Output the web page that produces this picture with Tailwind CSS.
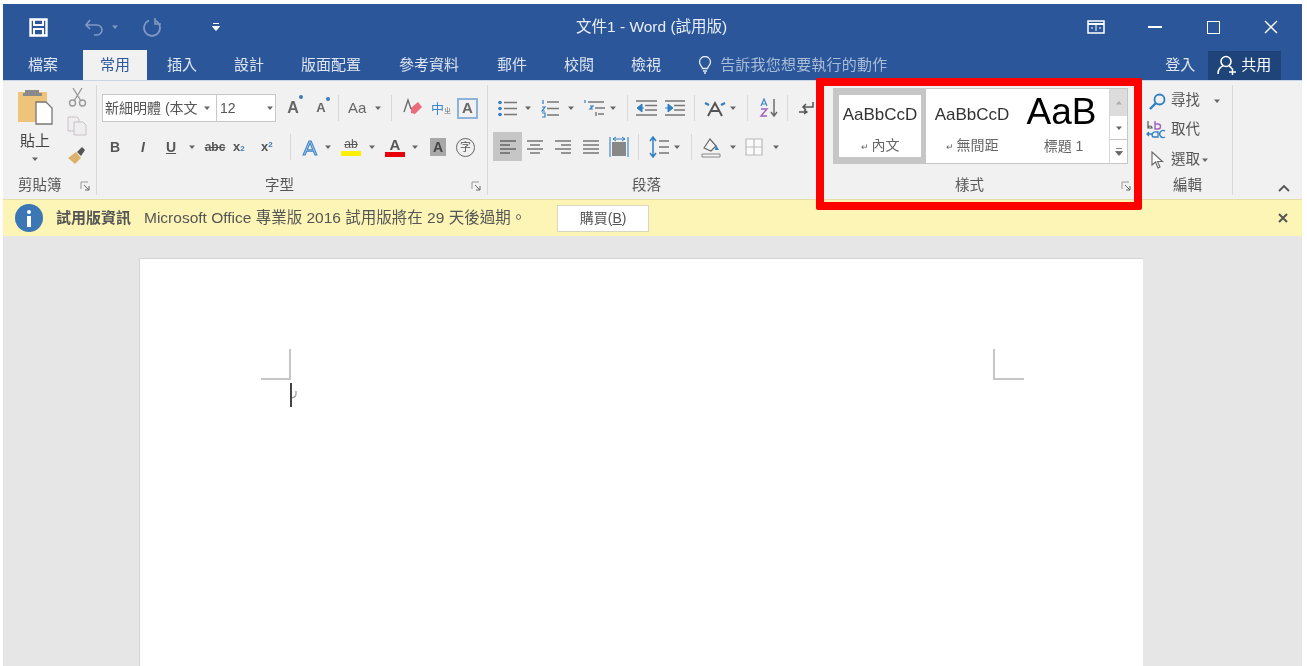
<!DOCTYPE html>
<html lang="zh-Hant">
<head>
  <meta charset="UTF-8" />
  <title>文件1 - Word (試用版)</title>
  <script src="https://cdn.jsdelivr.net/npm/@tailwindcss/browser@4"></script>
</head>
<body class="bg-white h-[666px] overflow-hidden font-['Liberation_Sans','Noto_Sans_CJK_TC',sans-serif] text-[#555]">

  <svg class="hidden">
    <symbol id="caret" viewBox="0 0 8 8"><path d="M1 2.5h6L4 6z" fill="#666"/></symbol>
    <symbol id="launcher" viewBox="0 0 10 10"><path d="M1 8V1h7" fill="none" stroke="#999"/><path d="M4 4l5 5M9 5v4H5" fill="none" stroke="#666"/></symbol>
    <symbol id="lines" viewBox="0 0 18 16"><path d="M1 2h16M1 6h16M1 10h16M1 14h16" stroke="#777" stroke-width="1.5"/></symbol>
  </svg>

  <div class="ml-[3px] mr-[5px] mt-[4px] flex flex-col h-[662px] blur-[0.6px]">

    <!-- Title bar -->
    <div class="h-[46px] bg-[#2b579a] flex items-center text-white relative">
      <svg class="ml-[26px] w-[19px] h-[19px]" viewBox="0 0 19 19"><path d="M1.5 1.5h16v16h-16z" fill="none" stroke="#fff" stroke-width="2.4"/><path d="M5 2v5h9V2M5 17v-6h9v6" fill="none" stroke="#fff" stroke-width="2"/></svg>
      <svg class="ml-[36px] w-[20px] h-[19px] opacity-40" viewBox="0 0 20 19"><path d="M2 7h11a5 5 0 0 1 0 10h-3M6 2L2 7l4 4" fill="none" stroke="#fff" stroke-width="1.6"/></svg>
      <svg class="ml-[7px] w-[8px] h-[8px] opacity-40" viewBox="0 0 8 8"><path d="M1 2.5h6L4 6z" fill="#fff"/></svg>
      <svg class="ml-[23px] w-[20px] h-[20px] opacity-40" viewBox="0 0 20 20"><path d="M7 3.5a8 8 0 1 0 6 0M13 1v6h6" fill="none" stroke="#fff" stroke-width="1.6"/></svg>
      <svg class="ml-[50px] w-[8px] h-[10px]" viewBox="0 0 8 10"><path d="M1 1.5h6M.5 4.5h7L4 8.5z" stroke="#fff" fill="#fff"/></svg>
      <span class="ml-[356px] text-[15.5px] text-[#e8edf5] whitespace-nowrap">文件1 - Word (試用版)</span>
      <svg class="ml-[360px] w-[18px] h-[14px]" viewBox="0 0 18 14"><path d="M1 1h16v12H1z" fill="none" stroke="#fff" stroke-width="1.5"/><path d="M1 4h16" stroke="#fff" stroke-width="2"/><path d="M9 5v6M6 8l-2 0M12 8h2" stroke="#fff"/></svg>
      <div class="ml-[43px] w-[14px] h-[1.5px] bg-white"></div>
      <div class="ml-[45px] w-[13px] h-[13px] border-[1.5px] border-white"></div>
      <svg class="ml-[44px] w-[14px] h-[14px]" viewBox="0 0 14 14"><path d="M1 1l12 12M13 1L1 13" stroke="#fff" stroke-width="1.4"/></svg>
    </div>

    <!-- Tabs -->
    <div class="h-[30px] bg-[#2b579a] flex items-center text-[15px] text-[#dfe6f1] whitespace-nowrap">
      <span class="ml-[25px]">檔案</span>
      <span class="ml-[25px] h-[30px] w-[64px] bg-[#f1f1f1] text-[#2b579a] flex items-center justify-center">常用</span>
      <span class="ml-[20px]">插入</span>
      <span class="ml-[37px]">設計</span>
      <span class="ml-[37px]">版面配置</span>
      <span class="ml-[38px]">參考資料</span>
      <span class="ml-[38px]">郵件</span>
      <span class="ml-[37px]">校閱</span>
      <span class="ml-[37px]">檢視</span>
      <svg class="ml-[37px] w-[14px] h-[18px]" viewBox="0 0 14 18"><path d="M4.5 12.5C4 10 1.500 9 1.500 6a5.500 5.500 0 0 1 11 0c0 3-2.500 4-3 6.500zM5 15h4M6 17h2" fill="none" stroke="#e6ecf5" stroke-width="1.300"/></svg>
      <span class="ml-[8px] tracking-[0.2px] text-[#a9bcd8]">告訴我您想要執行的動作</span>
      <span class="ml-[278px]">登入</span>
      <div class="ml-[13px] h-[29px] w-[73px] bg-[#1f4479] flex items-center text-white">
        <svg class="ml-[9px] w-[20px] h-[20px]" viewBox="0 0 20 20"><circle cx="9" cy="6.500" r="5" fill="none" stroke="#fff" stroke-width="1.600"/><path d="M1 19c0-5 3-7.500 5-8M12 11c1.500.6 2.500 1.500 3 3M12 17h7M15.500 13.500v7" fill="none" stroke="#fff" stroke-width="1.500"/></svg>
        <span class="ml-[4px]">共用</span>
      </div>
    </div>

    <!-- Ribbon -->
    <div class="h-[119px] bg-[#f1f1f1] flex text-[14.5px] border-t border-[#c9d4e5]">

      <!-- Clipboard -->
      <div class="w-[94px] flex flex-col border-r border-[#d8d8d8] my-[4px]">
        <div class="flex h-[91px] shrink-0">
          <div class="w-[64px] flex flex-col items-center pt-[3px]">
            <svg class="w-[36px] h-[37px] shrink-0" viewBox="0 0 36 37"><path d="M1 4h29v30H1z" fill="#eec47a"/><path d="M8 5V2h14v3h3v3H6V5z" fill="#8a8a8a"/><path d="M19 14h10l6 6v16H19z" fill="#fff" stroke="#777" stroke-width="1.300"/></svg>
            <span class="text-[15px] leading-[18px] mt-[7px] text-[#444]">貼上</span>
            <svg class="w-[8px] h-[8px] mt-[5px]"><use href="#caret"/></svg>
          </div>
          <div class="flex flex-col items-center gap-[9px] pt-[2px]">
            <svg class="w-[19px] h-[20px]" viewBox="0 0 19 20"><path d="M5 1l8 13M14 1L6 14" stroke="#999" stroke-width="1.400"/><circle cx="4.500" cy="16" r="3" fill="none" stroke="#999" stroke-width="1.400"/><circle cx="14.500" cy="16" r="3" fill="none" stroke="#999" stroke-width="1.400"/></svg>
            <svg class="w-[20px] h-[20px]" viewBox="0 0 20 20"><path d="M1 1h9l2 2v12H1z" fill="#eee" stroke="#c8c0c8"/><path d="M7 6h9l3 3v10H7z" fill="#eee" stroke="#c8c0c8"/></svg>
            <svg class="w-[20px] h-[20px]" viewBox="0 0 20 20"><path d="M1 13l8-6 5 6-6 6z" fill="#dcb26a"/><path d="M10 7l5-5 3 3-4 6z" fill="#555"/></svg>
          </div>
        </div>
        <div class="flex items-center h-[16px] mt-auto mb-[1px] pl-[15px] pr-[6px]">
          <span>剪貼簿</span>
          <svg class="ml-auto w-[10px] h-[10px]"><use href="#launcher"/></svg>
        </div>
      </div>

      <!-- Font -->
      <div class="w-[391px] flex flex-col border-r border-[#d8d8d8] my-[4px] pt-[9px] pl-[5px]">
        <div class="flex items-center h-[28px] shrink-0">
          <div class="w-[174px] h-[28px] bg-white border border-[#c8c8c8] flex items-center text-[14px] text-[#555]">
            <div class="w-[114px] h-full border-r border-[#c8c8c8] flex items-center pl-[2px]">
              <span class="w-[98px] overflow-hidden whitespace-nowrap">新細明體 (本文</span>
              <svg class="w-[8px] h-[8px]"><use href="#caret"/></svg>
            </div>
            <span class="ml-[3px] w-[46px]">12</span>
            <svg class="w-[8px] h-[8px]"><use href="#caret"/></svg>
          </div>
          <span class="ml-[8px] w-[18px] text-[16px] font-bold text-center text-[#666] relative">A<span class="absolute -top-[1px] -right-[1px] w-[4px] h-[4px] bg-[#3a7ab8] rounded-full"></span></span>
          <span class="ml-[10px] w-[18px] text-[13px] font-bold text-center text-[#666] relative">A<span class="absolute -top-[1px] right-0 w-[4px] h-[4px] bg-[#3a7ab8] rounded-full"></span></span>
          <div class="ml-[8px] w-px h-[26px] bg-[#d8d8d8]"></div>
          <span class="ml-[9px] w-[24px] text-[15px] text-[#666]">Aa</span>
          <svg class="ml-[2px] w-[8px] h-[8px]"><use href="#caret"/></svg>
          <div class="ml-[9px] w-px h-[26px] bg-[#d8d8d8]"></div>
          <svg class="ml-[11px] w-[20px] h-[20px]" viewBox="0 0 20 20"><path d="M8 10l7-6 4 5-7 7-4-1z" fill="#ec6b7c"/><path d="M1 14L5 2l3 9" fill="none" stroke="#666" stroke-width="1.300"/></svg>
          <span class="ml-[8px] w-[20px] text-[13px] text-[#3a86c8] leading-none whitespace-nowrap">中<span class="text-[7px] text-[#666]">ㄓ</span></span>
          <span class="ml-[6px] w-[21px] h-[21px] border-2 border-[#8db4d8] text-[15px] font-bold text-[#666] flex items-center justify-center">A</span>
        </div>
        <div class="flex items-center h-[28px] shrink-0 mt-[11px] text-[#555]">
          <span class="ml-[6px] w-[14px] font-bold text-center text-[14px]">B</span>
          <span class="ml-[14px] w-[14px] font-bold italic text-center text-[14px]">I</span>
          <span class="ml-[14px] w-[14px] font-bold underline text-center text-[14px]">U</span>
          <svg class="ml-[10px] w-[8px] h-[8px]"><use href="#caret"/></svg>
          <span class="ml-[8px] w-[22px] text-[12px] font-bold line-through text-center">abc</span>
          <span class="ml-[7px] w-[16px] text-[13px] font-bold whitespace-nowrap">x<span class="text-[8px] text-[#3a7ab8]">2</span></span>
          <span class="ml-[12px] w-[16px] text-[13px] font-bold whitespace-nowrap">x<sup class="text-[8px] text-[#3a7ab8]">2</sup></span>
          <div class="ml-[13px] w-px h-[26px] bg-[#d8d8d8]"></div>
          <span class="ml-[9px] w-[20px] text-[21px] leading-none text-center text-[#a9cdea] [-webkit-text-stroke:1px_#3d85c6]">A</span>
          <svg class="ml-[4px] w-[8px] h-[8px]"><use href="#caret"/></svg>
          <div class="ml-[9px] w-[20px] flex flex-col items-center">
            <span class="text-[12px] leading-[13px] line-through">ab</span>
            <div class="w-[20px] h-[5px] bg-[#ffef00]"></div>
          </div>
          <svg class="ml-[7px] w-[8px] h-[8px]"><use href="#caret"/></svg>
          <div class="ml-[9px] w-[20px] flex flex-col items-center">
            <span class="text-[15px] leading-[14px] font-bold">A</span>
            <div class="w-[20px] h-[5px] bg-[#e8000b]"></div>
          </div>
          <svg class="ml-[6px] w-[8px] h-[8px]"><use href="#caret"/></svg>
          <span class="ml-[11px] w-[16px] h-[18px] bg-[#a8a8a8] text-[14px] font-bold text-center leading-[18px] text-[#444]">A</span>
          <span class="ml-[10px] w-[19px] h-[19px] rounded-full border border-[#666] text-[11px] flex items-center justify-center">字</span>
        </div>
        <div class="flex items-center h-[16px] mt-auto mb-[1px] pr-[6px]">
          <span class="ml-[163px]">字型</span>
          <svg class="ml-auto w-[10px] h-[10px]"><use href="#launcher"/></svg>
        </div>
      </div>

      <!-- Paragraph -->
      <div class="w-[336px] flex flex-col border-r border-[#d8d8d8] my-[4px] pt-[9px]">
        <div class="flex items-center h-[28px] shrink-0">
          <svg class="ml-[10px] w-[19px] h-[17px]" viewBox="0 0 19 17"><circle cx="2" cy="2.500" r="1.800" fill="#2f7fc4"/><circle cx="2" cy="8.500" r="1.800" fill="#2f7fc4"/><circle cx="2" cy="14.500" r="1.800" fill="#2f7fc4"/><path d="M6 2.500h13M6 8.500h13M6 14.500h13" stroke="#777" stroke-width="1.500"/></svg>
          <svg class="ml-[7px] w-[8px] h-[8px]"><use href="#caret"/></svg>
          <svg class="ml-[9px] w-[18px] h-[19px]" viewBox="0 0 18 19"><path d="M2 1v4M1 8h3L1 12h3M1 14h3v4H1" fill="none" stroke="#2f7fc4" stroke-width="1.200"/><path d="M6 3h12M6 9.500h12M6 16h12" stroke="#777" stroke-width="1.500"/></svg>
          <svg class="ml-[8px] w-[8px] h-[8px]"><use href="#caret"/></svg>
          <svg class="ml-[9px] w-[22px] h-[19px]" viewBox="0 0 22 19"><path d="M1 1v3M6 7h3l-3 3h3" fill="none" stroke="#2f7fc4" stroke-width="1.200"/><path d="M4 3h16M11 9h10M14 15h6M12 13v4" stroke="#777" stroke-width="1.400"/></svg>
          <svg class="ml-[3px] w-[8px] h-[8px]"><use href="#caret"/></svg>
          <div class="ml-[10px] w-px h-[26px] bg-[#d8d8d8]"></div>
          <svg class="ml-[8px] w-[21px] h-[18px]" viewBox="0 0 21 18"><path d="M0 2h21M9 6.500h12M9 11h12M0 16h21" stroke="#777" stroke-width="1.500"/><path d="M1 9l5-4v8zM4 9h4" fill="#2f7fc4" stroke="#2f7fc4"/></svg>
          <svg class="ml-[8px] w-[20px] h-[18px]" viewBox="0 0 20 18"><path d="M0 2h20M9 6.500h11M9 11h11M0 16h20" stroke="#777" stroke-width="1.500"/><path d="M8 9L3 5v8zM5 9H0" fill="#2f7fc4" stroke="#2f7fc4"/></svg>
          <div class="ml-[9px] w-px h-[26px] bg-[#d8d8d8]"></div>
          <svg class="ml-[9px] w-[22px] h-[18px]" viewBox="0 0 22 18"><path d="M4 17L11 4l7 13M7 12h8" fill="none" stroke="#555" stroke-width="2"/><path d="M1 4l4 2M21 4l-4 2" stroke="#2f7fc4" stroke-width="2.400"/></svg>
          <svg class="ml-[3px] w-[8px] h-[8px]"><use href="#caret"/></svg>
          <div class="ml-[10px] w-px h-[26px] bg-[#d8d8d8]"></div>
          <svg class="ml-[11px] w-[20px] h-[20px]" viewBox="0 0 20 20"><path d="M2 8l3-7 3 7M3 6h4" fill="none" stroke="#3f86c6" stroke-width="1.200"/><path d="M2 11h6l-6 7h6" fill="none" stroke="#a060c0" stroke-width="1.400"/><path d="M15 1v17M12 14l3 4 3-4" fill="none" stroke="#666" stroke-width="1.400"/></svg>
          <div class="ml-[8px] w-px h-[26px] bg-[#d8d8d8]"></div>
          <svg class="ml-[11px] w-[15px] h-[16px]" viewBox="0 0 15 16"><path d="M14 2v5H4M7 4L4 7l3 3" fill="none" stroke="#555" stroke-width="1.500"/><path d="M0 12h8M5 10l3 2-3 2" fill="none" stroke="#555" stroke-width="1.400"/></svg>
        </div>
        <div class="flex items-center h-[29px] shrink-0 mt-[10px]">
          <div class="ml-[5px] w-[29px] h-[29px] bg-[#c6c6c6] flex items-center justify-center">
            <svg class="w-[18px] h-[16px]" viewBox="0 0 18 16"><path d="M1 2h16M1 6h10M1 10h16M1 14h10" stroke="#666" stroke-width="1.500"/></svg>
          </div>
          <svg class="ml-[4px] w-[18px] h-[16px]" viewBox="0 0 18 16"><path d="M1 2h16M4 6h10M1 10h16M4 14h10" stroke="#777" stroke-width="1.500"/></svg>
          <svg class="ml-[10px] w-[18px] h-[16px]" viewBox="0 0 18 16"><path d="M1 2h16M7 6h10M1 10h16M7 14h10" stroke="#777" stroke-width="1.500"/></svg>
          <svg class="ml-[10px] w-[18px] h-[16px]"><use href="#lines"/></svg>
          <svg class="ml-[9px] w-[20px] h-[22px]" viewBox="0 0 20 22"><path d="M1 1v20M19 1v20" stroke="#6ea6d6" stroke-width="1.600"/><path d="M3 6h14v14H3z" fill="#888"/><path d="M4 3h12M7 1L4 3l3 2M13 1l3 2-3 2" fill="none" stroke="#2f7fc4"/></svg>
          <div class="ml-[9px] w-px h-[26px] bg-[#d8d8d8]"></div>
          <svg class="ml-[10px] w-[20px] h-[24px]" viewBox="0 0 20 24"><path d="M4 3v18M1 6l3-4 3 4M1 18l3 4 3-4" fill="none" stroke="#2f7fc4" stroke-width="1.500"/><path d="M10 6h10M10 12h10M10 18h10" stroke="#777" stroke-width="1.500"/></svg>
          <svg class="ml-[4px] w-[8px] h-[8px]"><use href="#caret"/></svg>
          <div class="ml-[10px] w-px h-[26px] bg-[#d8d8d8]"></div>
          <svg class="ml-[9px] w-[20px] h-[22px]" viewBox="0 0 20 22"><path d="M3 12l6-9 6 7-5 5z" fill="#f4f4f4" stroke="#666" stroke-width="1.200"/><path d="M15 9l3 5h-4z" fill="#2f7fc4"/><path d="M1 18h18v3H1z" fill="#f4f4f4" stroke="#888"/></svg>
          <svg class="ml-[8px] w-[8px] h-[8px]"><use href="#caret"/></svg>
          <svg class="ml-[8px] w-[18px] h-[18px]" viewBox="0 0 18 18"><path d="M1 1h16v16H1zM9 1v16M1 9h16" fill="#fafafa" stroke="#bbb" stroke-width="1.200"/></svg>
          <svg class="ml-[9px] w-[8px] h-[8px]"><use href="#caret"/></svg>
        </div>
        <div class="flex items-center h-[16px] mt-auto mb-[1px] pr-[3px]">
          <span class="ml-[144px]">段落</span>
        </div>
      </div>

      <!-- Styles -->
      <div class="w-[315px] flex flex-col my-[4px] pt-[3px] pl-[9px]">
        <div class="flex w-[295px] h-[76px] shrink-0 border border-[#c6c6c6] bg-[#c6c6c6]/40">
          <div class="w-[92px] border-x-[5px] border-y-[6px] border-[#c6c6c6] bg-white flex flex-col items-center pt-[10px]">
            <span class="text-[17px] leading-[20px] text-[#333] whitespace-nowrap">AaBbCcD</span>
            <span class="text-[14px] leading-[18px] mt-[11px] text-[#666]"><span class="text-[9px] mr-[3px]">↵</span>內文</span>
          </div>
          <div class="w-[92px] bg-white flex flex-col items-center pt-[16px]">
            <span class="text-[17px] leading-[20px] text-[#333] whitespace-nowrap">AaBbCcD</span>
            <span class="text-[14px] leading-[18px] mt-[11px] text-[#666] whitespace-nowrap"><span class="text-[9px] mr-[3px]">↵</span>無間距</span>
          </div>
          <div class="w-[91px] bg-white flex flex-col items-center">
            <span class="text-[37px] leading-[46px] text-black whitespace-nowrap -ml-[4px]">AaB</span>
            <span class="text-[14px] leading-[18px] mt-[2px] text-[#666] whitespace-nowrap">標題 1</span>
          </div>
          <div class="w-[18px] flex flex-col border-l border-[#d8d8d8]">
            <div class="h-[27px] bg-[#dcdcdc] flex items-center justify-center"><svg class="w-[8px] h-[8px] rotate-180 opacity-40"><use href="#caret"/></svg></div>
            <div class="h-[24px] bg-white border-b border-[#c6c6c6] flex items-center justify-center"><svg class="w-[8px] h-[8px]"><use href="#caret"/></svg></div>
            <div class="flex-1 bg-white flex items-center justify-center"><svg class="w-[8px] h-[9px]" viewBox="0 0 8 9"><path d="M1 1.500h6M.5 4.500h7L4 8.500z" stroke="#666" fill="#666" stroke-width=".8"/></svg></div>
          </div>
        </div>
        <div class="flex items-center h-[16px] mt-auto mb-[1px] w-[304px] pr-[6px]">
          <span class="ml-[122px]">樣式</span>
          <svg class="ml-auto w-[10px] h-[10px]"><use href="#launcher"/></svg>
        </div>
      </div>

      <!-- Editing -->
      <div class="w-[94px] flex flex-col border-r border-[#d8d8d8] my-[4px] pt-[2px]">
        <div class="flex items-center h-[28px] shrink-0">
          <svg class="ml-[10px] w-[17px] h-[17px]" viewBox="0 0 17 17"><circle cx="10.500" cy="6.500" r="5" fill="none" stroke="#2f7fc4" stroke-width="1.800"/><path d="M7 10l-6 6" stroke="#2f7fc4" stroke-width="2.400"/></svg>
          <span class="ml-[5px]">尋找</span>
          <svg class="ml-[13px] w-[8px] h-[8px]"><use href="#caret"/></svg>
        </div>
        <div class="flex items-center h-[30px] shrink-0">
          <svg class="ml-[7px] w-[20px] h-[20px]" viewBox="0 0 20 20"><path d="M2 1v7h4a2 2 0 0 0-4 0" fill="none" stroke="#555" stroke-width="1.200"/><path d="M9 1v8h3a2.500 2.500 0 0 0 0-5H9" fill="none" stroke="#a060c0" stroke-width="1.400"/><path d="M1 14h5M3 12l-2 2 2 2M7 17a3 3 0 0 1 3-5h2v5zM19 11a3.500 3.500 0 1 0 0 6" fill="none" stroke="#2f7fc4" stroke-width="1.300"/></svg>
          <span class="ml-[5px]">取代</span>
        </div>
        <div class="flex items-center h-[29px] shrink-0">
          <svg class="ml-[12px] w-[13px] h-[18px]" viewBox="0 0 13 18"><path d="M1 1v13l3.500-3 2.500 6 2-1-2.500-5.500h5z" fill="#fff" stroke="#666" stroke-width="1.100"/></svg>
          <span class="ml-[7px]">選取</span>
          <svg class="ml-[1px] w-[8px] h-[8px]"><use href="#caret"/></svg>
        </div>
        <div class="flex items-center h-[16px] mt-auto mb-[1px]">
          <span class="ml-[34px]">編輯</span>
        </div>
      </div>

      <div class="flex-1 flex items-end justify-end pb-[7px] pr-[12px]">
        <svg class="w-[12px] h-[8px]" viewBox="0 0 12 8"><path d="M1 7l5-5 5 5" fill="none" stroke="#555" stroke-width="1.800"/></svg>
      </div>
    </div>

    <!-- Info bar -->
    <div class="h-[37px] bg-[#fcf5b6] flex items-center border-t border-[#e4dfa8] text-[#555] whitespace-nowrap">
      <div class="ml-[12px] w-[28px] h-[28px] rounded-full bg-[#3a77b4] flex flex-col items-center pt-[6px] gap-[2px]">
        <div class="w-[4px] h-[4px] bg-white rounded-full"></div>
        <div class="w-[4px] h-[11px] bg-white"></div>
      </div>
      <span class="ml-[13px] w-[75px] font-bold text-[15px]">試用版資訊</span>
      <span class="ml-[13px] text-[15.5px]">Microsoft Office 專業版 2016 試用版將在 29 天後過期。</span>
      <div class="ml-[31px] w-[92px] h-[27px] bg-white border border-[#d8d8c0] flex items-center justify-center text-[14px]">購買(<span class="underline">B</span>)</div>
      <svg class="ml-auto mr-[14px] w-[10px] h-[10px]" viewBox="0 0 10 10"><path d="M1 1l8 8M9 1L1 9" stroke="#555" stroke-width="2"/></svg>
    </div>

    <!-- Document -->
    <div class="flex-1 bg-[#e6e6e6] pt-[22px] pl-[136px] overflow-hidden">
      <div class="w-[1004px] h-[500px] bg-white border-l border-t border-[#d4d4d4] pt-[90px] pl-[121px]">
        <div class="flex">
          <div class="w-[30px] h-[31px] border-r-2 border-b-2 border-[#c6c6c6]"></div>
          <div class="ml-[702px] w-[31px] h-[31px] border-l-2 border-b-2 border-[#c6c6c6]"></div>
        </div>
        <div class="ml-[29px] mt-[3px] flex items-center">
          <div class="w-[2px] h-[24px] bg-[#444]"></div>
          <svg class="w-[6px] h-[10px] -ml-[1px]" viewBox="0 0 6 10"><path d="M5 1v3Q5 7 1 8" fill="none" stroke="#999" stroke-width="1.200"/></svg>
        </div>
      </div>
    </div>
  </div>

  <!-- Red highlight over the styles group -->
  <div class="absolute left-[816px] top-[78px] w-[326px] h-[132px] border-[8px] border-[#ff0000] rounded-[2px]"></div>

</body>
</html>
